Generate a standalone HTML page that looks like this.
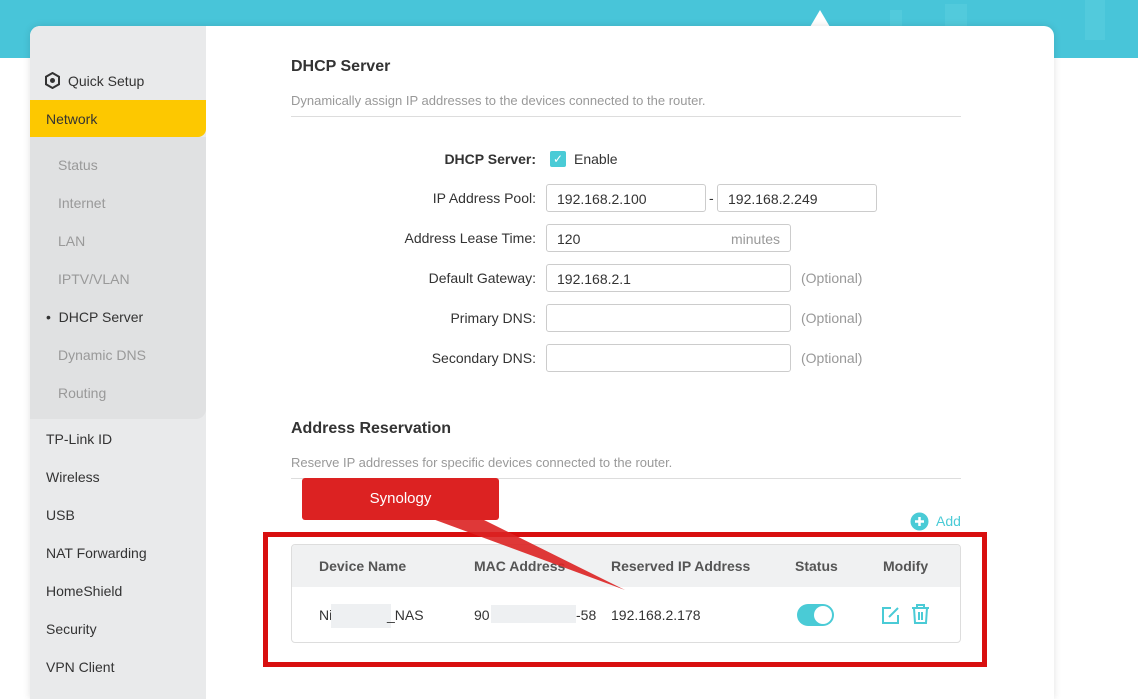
<!DOCTYPE html>
<html><head><style>
*{margin:0;padding:0;box-sizing:border-box}
html,body{width:1138px;height:699px;overflow:hidden}
body{background:#fff;font-family:"Liberation Sans",Arial,sans-serif;position:relative}
.top{position:absolute;left:0;top:0;width:1138px;height:58px;background:#48c5d9}
.card{position:absolute;left:30px;top:26px;width:1024px;height:673px;background:#fff;border-radius:10px 10px 0 0;box-shadow:0 0 8px rgba(0,0,0,.12);overflow:hidden}
.side{position:absolute;left:0;top:0;width:176px;height:700px;background:#e9eaeb}
.sub{position:absolute;left:0;top:111px;width:176px;height:282px;background:#e0e1e2;border-radius:0 0 10px 0}
.net{position:absolute;left:0;top:74px;width:176px;height:37px;background:#fdc800;border-radius:0 0 8px 0;font-size:14px;color:#333;padding:11px 16px}
.it{position:absolute;left:16px;font-size:14px;color:#333}
.si{position:absolute;left:28px;font-size:14px;color:#999}
.abs{position:absolute}
h2{position:absolute;font-size:16px;font-weight:bold;color:#333}
.desc{position:absolute;font-size:13px;color:#999}
.hr{position:absolute;height:1px;background:#ddd}
.lbl{position:absolute;font-size:14px;color:#333;text-align:right;width:260px}
.inp{position:absolute;height:28px;border:1px solid #ccc;border-radius:3px;font-size:14px;color:#333;padding:6px 10px}
.opt{position:absolute;font-size:14px;color:#999}
.th{position:absolute;font-size:14px;font-weight:bold;color:#555;top:558px}
.t{position:absolute;font-size:14px;color:#333;top:607px}
</style></head><body>
<div class="top"></div>
<div class="abs" style="left:810px;top:10px;width:0;height:0;border-left:10px solid transparent;border-right:10px solid transparent;border-bottom:17px solid #fff"></div>
<div class="abs" style="left:890px;top:10px;width:12px;height:16px;background:#5ccfdf;opacity:.5"></div>
<div class="abs" style="left:945px;top:4px;width:22px;height:22px;background:#5ccfdf;opacity:.5"></div>
<div class="abs" style="left:1085px;top:0;width:20px;height:40px;background:#5ccfdf;opacity:.5"></div>
<div class="card">
<div class="side"></div>
<div class="sub"></div>
<svg class="abs" style="left:14px;top:46px" width="17" height="17" viewBox="0 0 17 17"><polygon points="8.5,1 15,4.7 15,12.3 8.5,16 2,12.3 2,4.7" fill="none" stroke="#333" stroke-width="2"/><circle cx="8.5" cy="8.5" r="2.5" fill="#333"/></svg>
<div class="it" style="left:38px;top:47px">Quick Setup</div>
<div class="net">Network</div>
<div class="si" style="top:131px">Status</div>
<div class="si" style="top:169px">Internet</div>
<div class="si" style="top:207px">LAN</div>
<div class="si" style="top:245px">IPTV/VLAN</div>
<div class="si" style="top:283px;left:16px;color:#333">•&nbsp; DHCP Server</div>
<div class="si" style="top:321px">Dynamic DNS</div>
<div class="si" style="top:359px">Routing</div>
<div class="it" style="top:405px">TP-Link ID</div>
<div class="it" style="top:443px">Wireless</div>
<div class="it" style="top:481px">USB</div>
<div class="it" style="top:519px">NAT Forwarding</div>
<div class="it" style="top:557px">HomeShield</div>
<div class="it" style="top:595px">Security</div>
<div class="it" style="top:633px">VPN Client</div>
</div>
<h2 style="left:291px;top:58px">DHCP Server</h2>
<div class="desc" style="left:291px;top:93px">Dynamically assign IP addresses to the devices connected to the router.</div>
<div class="hr" style="left:291px;top:116px;width:670px"></div>
<div class="lbl" style="left:276px;top:151px;font-weight:bold">DHCP Server:</div>
<div class="abs" style="left:550px;top:151px;width:16px;height:16px;background:#4acbd6;border-radius:2px;color:#fff;font-size:12px;text-align:center;line-height:16px">✓</div>
<div class="abs" style="left:574px;top:151px;font-size:14px;color:#333">Enable</div>
<div class="lbl" style="left:276px;top:190px">IP Address Pool:</div>
<div class="inp" style="left:546px;top:184px;width:160px">192.168.2.100</div>
<div class="abs" style="left:709px;top:190px;font-size:14px;color:#333">-</div>
<div class="inp" style="left:717px;top:184px;width:160px">192.168.2.249</div>
<div class="lbl" style="left:276px;top:230px">Address Lease Time:</div>
<div class="inp" style="left:546px;top:224px;width:245px">120<span style="float:right;color:#999">minutes</span></div>
<div class="lbl" style="left:276px;top:270px">Default Gateway:</div>
<div class="inp" style="left:546px;top:264px;width:245px">192.168.2.1</div>
<div class="opt" style="left:801px;top:270px">(Optional)</div>
<div class="lbl" style="left:276px;top:310px">Primary DNS:</div>
<div class="inp" style="left:546px;top:304px;width:245px"></div>
<div class="opt" style="left:801px;top:310px">(Optional)</div>
<div class="lbl" style="left:276px;top:350px">Secondary DNS:</div>
<div class="inp" style="left:546px;top:344px;width:245px"></div>
<div class="opt" style="left:801px;top:350px">(Optional)</div>
<h2 style="left:291px;top:420px">Address Reservation</h2>
<div class="desc" style="left:291px;top:455px">Reserve IP addresses for specific devices connected to the router.</div>
<div class="hr" style="left:291px;top:478px;width:670px"></div>
<svg class="abs" style="left:910px;top:512px" width="19" height="19"><circle cx="9.5" cy="9.5" r="9" fill="#4acbd6"/><path d="M9.5 5v9M5 9.5h9" stroke="#fff" stroke-width="2.5"/></svg>
<div class="abs" style="left:936px;top:513px;font-size:14px;color:#4acbd6">Add</div>
<div class="abs" style="left:291px;top:544px;width:670px;height:99px;border:1px solid #ddd;border-radius:4px;overflow:hidden"><div style="height:42px;background:#f0f1f2"></div></div>
<div class="th" style="left:319px">Device Name</div>
<div class="th" style="left:474px">MAC Address</div>
<div class="th" style="left:611px">Reserved IP Address</div>
<div class="th" style="left:795px">Status</div>
<div class="th" style="left:883px">Modify</div>
<div class="t" style="left:319px">Ni</div>
<div class="abs" style="left:331px;top:604px;width:60px;height:24px;background:#eef0f2"></div>
<div class="t" style="left:387px">_NAS</div>
<div class="t" style="left:474px">90</div>
<div class="abs" style="left:491px;top:605px;width:85px;height:18px;background:#eef0f2"></div>
<div class="t" style="left:576px">-58</div>
<div class="t" style="left:611px">192.168.2.178</div>
<div class="abs" style="left:797px;top:604px;width:37px;height:22px;background:#4acbd6;border-radius:11px"><div style="position:absolute;right:2px;top:2px;width:18px;height:18px;background:#fff;border-radius:50%"></div></div>
<svg class="abs" style="left:881px;top:605px" width="20" height="20" viewBox="0 0 20 20" fill="none" stroke="#4acbd6" stroke-width="2"><path d="M10 3H2v15h15v-8"/><path d="M8 12l9-9"/></svg>
<svg class="abs" style="left:911px;top:604px" width="19" height="20" viewBox="0 0 19 20" fill="none" stroke="#4acbd6" stroke-width="2"><path d="M1 4h17M6 4V1h7v3M3 4l1 15h11l1-15M8 8v8M11 8v8"/></svg>
<div class="abs" style="left:263px;top:532px;width:724px;height:135px;border:5px solid #d80f0f"></div>
<svg class="abs" style="left:0;top:0" width="1138" height="699"><polygon points="430,518 480,518 625,590" fill="#dc2222" opacity=".9"/></svg>
<div class="abs" style="left:302px;top:478px;width:197px;height:42px;background:#dc2222;border-radius:3px;color:#fff;font-size:15px;text-align:center;line-height:42px">Synology</div>
</body></html>
